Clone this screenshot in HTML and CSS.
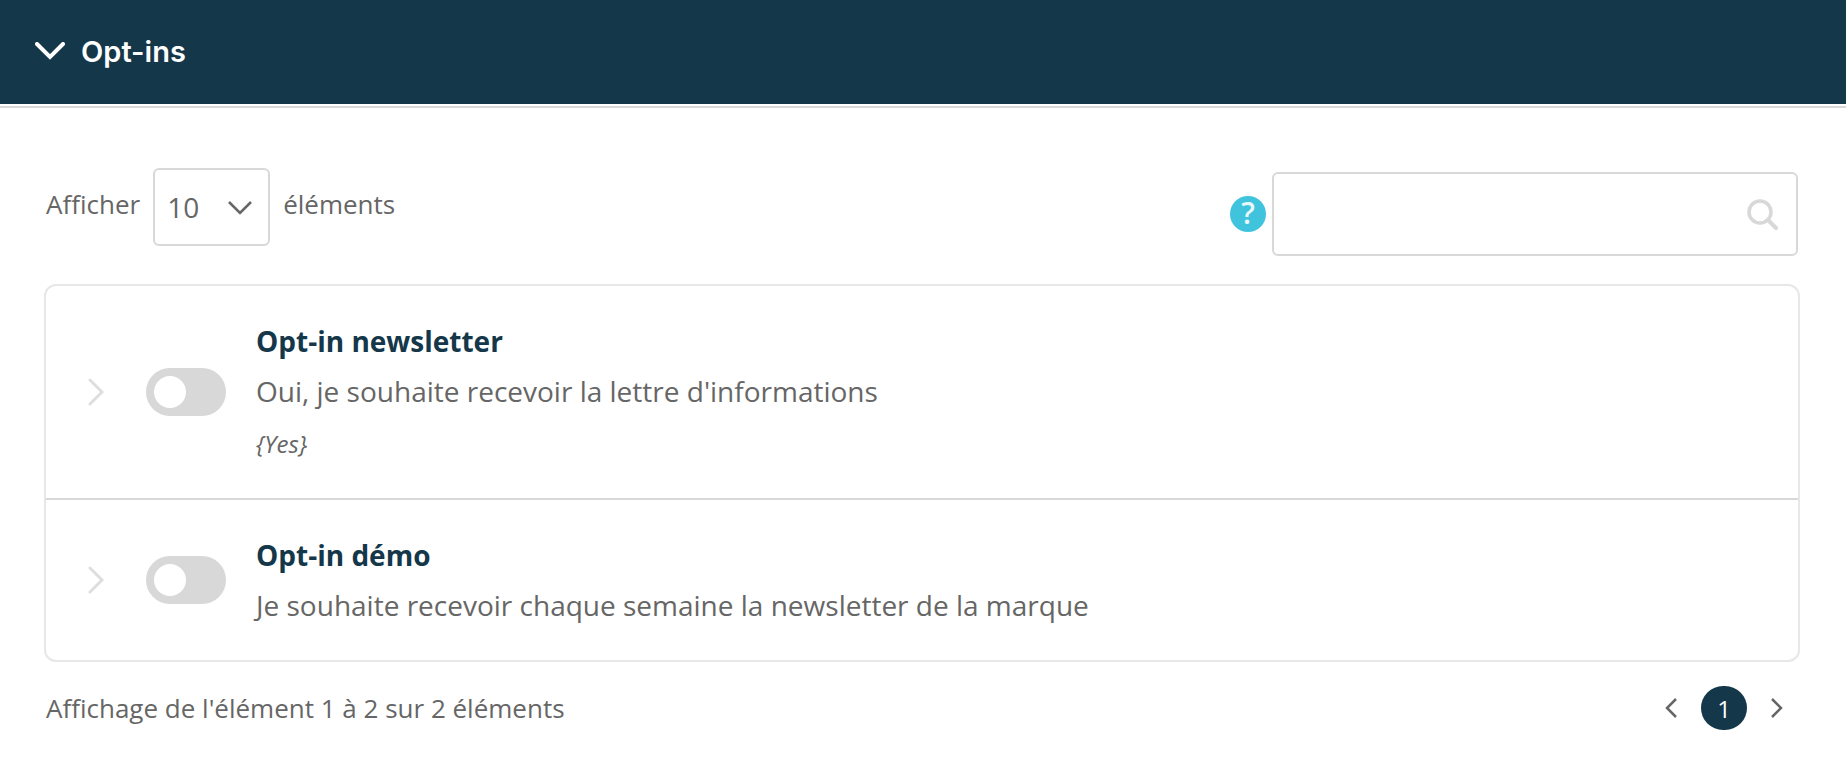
FILE: index.html
```html
<!DOCTYPE html>
<html lang="fr">
<head>
    <meta charset="UTF-8">
    <meta name="viewport" content="width=device-width, initial-scale=1.0">
    <title>Opt-ins</title>
    <link rel="stylesheet" href="styles.css">
</head>
<body>
    <section class="panel">
        <header class="panel-header">
            <button type="button" class="panel-toggle" aria-expanded="true">
                <svg width="30" height="18" viewBox="0 0 30 18" fill="none" stroke="currentColor" stroke-width="4" stroke-linecap="round"><path d="M2 2l13 13L28 2"/></svg>
                <span>Opt-ins</span>
            </button>
        </header>

        <div class="panel-body">
            <div class="toolbar">
                <div class="length">
                    <label for="pageLength">Afficher</label>
                    <div class="select-box">
                        <select id="pageLength">
                            <option value="10">10</option>
                            <option value="25">25</option>
                            <option value="50">50</option>
                        </select>
                        <svg class="select-arrow" width="24" height="14" viewBox="0 0 24 14" fill="none" stroke="currentColor" stroke-width="2.5"><path d="M1 1l11 11L23 1"/></svg>
                    </div>
                    <label for="pageLength">éléments</label>
                </div>

                <div class="search">
                    <button type="button" class="help" aria-label="Aide">?</button>
                    <div class="search-box">
                        <input type="search" id="search" aria-label="Rechercher">
                        <svg class="search-icon" width="32" height="32" viewBox="0 0 32 32" fill="none" stroke="currentColor" stroke-linecap="round"><circle cx="13" cy="13" r="11" stroke-width="3.5"/><path d="M21 21l8 8" stroke-width="4"/></svg>
                    </div>
                </div>
            </div>

            <div class="table-box">
                <table class="optins">
                    <tbody>
                        <tr>
                            <td class="col-expand">
                                <button type="button" class="expand" aria-label="Détails">
                                    <svg width="16" height="28" viewBox="0 0 16 28" fill="none" stroke="currentColor" stroke-width="3" stroke-linecap="round"><path d="M2 2l12 12L2 26"/></svg>
                                </button>
                            </td>
                            <td class="col-switch">
                                <input type="checkbox" class="switch" aria-labelledby="optin1">
                            </td>
                            <td>
                                <div class="optin-title" id="optin1">Opt-in newsletter</div>
                                <div class="optin-text">Oui, je souhaite recevoir la lettre d'informations</div>
                                <div class="optin-value">{Yes}</div>
                            </td>
                        </tr>
                        <tr>
                            <td class="col-expand">
                                <button type="button" class="expand" aria-label="Détails">
                                    <svg width="16" height="28" viewBox="0 0 16 28" fill="none" stroke="currentColor" stroke-width="3" stroke-linecap="round"><path d="M2 2l12 12L2 26"/></svg>
                                </button>
                            </td>
                            <td class="col-switch">
                                <input type="checkbox" class="switch" aria-labelledby="optin2">
                            </td>
                            <td>
                                <div class="optin-title" id="optin2">Opt-in démo</div>
                                <div class="optin-text">Je souhaite recevoir chaque semaine la newsletter de la marque</div>
                            </td>
                        </tr>
                    </tbody>
                </table>
            </div>

            <div class="table-footer">
                <div class="info">Affichage de l'élément 1 à 2 sur 2 éléments</div>
                <nav class="pagination">
                    <button type="button" class="page-arrow" aria-label="Précédent">
                        <svg width="12" height="20" viewBox="0 0 12 20" fill="none" stroke="currentColor" stroke-width="2.5"><path d="M11 1l-9 9 9 9"/></svg>
                    </button>
                    <button type="button" class="page-number" aria-current="page">1</button>
                    <button type="button" class="page-arrow" aria-label="Suivant">
                        <svg width="12" height="20" viewBox="0 0 12 20" fill="none" stroke="currentColor" stroke-width="2.5"><path d="M1 1l9 9-9 9"/></svg>
                    </button>
                </nav>
            </div>
        </div>
    </section>
</body>
</html>
```
FILE: styles.css
```css
* {
    box-sizing: border-box;
}

body {
    margin: 0;
    font-family: "Open Sans", "Noto Sans", sans-serif;
    font-size: 26px;
    color: #666;
    background-color: #fff;
}

button, input, select {
    font-family: inherit;
    color: inherit;
}

button {
    display: flex;
    align-items: center;
    justify-content: center;
    padding: 0;
    border: none;
    background: none;
    cursor: pointer;
}

/* Header */
.panel-header {
    padding-bottom: 2px;
    border-bottom: 2px solid #d8d8d8;
}

.panel-toggle {
    justify-content: flex-start;
    gap: 16px;
    width: 100%;
    height: 104px;
    padding: 0 35px 2px;
    color: #fff;
    background-color: #15374a;
    font-family: Inter, sans-serif;
    font-size: 29px;
    font-weight: 600;
}

.panel-body {
    padding: 60px 46px 50px 44px;
}

/* Toolbar */
.toolbar {
    display: flex;
    justify-content: space-between;
    margin-bottom: 28px;
    padding: 0 2px;
}

.length {
    display: flex;
    align-items: center;
    align-self: flex-start;
    gap: 13px;
}

.length label {
    padding-bottom: 6px;
}

.select-box {
    position: relative;
}

.select-box select {
    appearance: none;
    width: 117px;
    height: 78px;
    padding: 0 12px;
    border: 2px solid #d8d8d8;
    border-radius: 6px;
    background-color: #fff;
    font-size: 28px;
}

.select-arrow {
    position: absolute;
    top: 33px;
    right: 18px;
    pointer-events: none;
}

.search {
    display: flex;
    align-items: center;
    gap: 6px;
    margin-top: 4px;
}

.help {
    width: 36px;
    height: 36px;
    padding-bottom: 2px;
    border-radius: 50%;
    color: #e9f8fb;
    background-color: #40c4de;
    font-size: 30px;
    font-weight: 600;
    line-height: 34px;
}

.search-box {
    position: relative;
}

.search-box input {
    appearance: none;
    display: block;
    width: 526px;
    height: 84px;
    padding: 0 60px 0 16px;
    border: 2px solid #d8d8d8;
    border-radius: 6px;
    background-color: #fff;
    font-size: 28px;
}

.search-icon {
    position: absolute;
    top: 27px;
    right: 19px;
    color: #d8d8d8;
    pointer-events: none;
}

/* Table */
.table-box {
    border: 2px solid #e7e7e7;
    border-radius: 12px;
}

.optins {
    width: 100%;
    border-spacing: 0;
}

.optins td {
    padding: 30px 0;
}

.optins tr + tr td {
    border-top: 2px solid #d8d8d8;
}

.optins .col-expand {
    width: 100px;
    padding-left: 42px;
}

.optins .col-switch {
    width: 110px;
}

.expand {
    color: #dedede;
}

.switch {
    appearance: none;
    display: block;
    width: 80px;
    height: 48px;
    margin: 0;
    padding: 8px;
    border-radius: 24px;
    background-color: #d8d8d8;
    cursor: pointer;
}

.switch::before {
    content: "";
    display: block;
    width: 32px;
    height: 32px;
    border-radius: 50%;
    background-color: #fff;
}

.switch:checked {
    background-color: #15374a;
}

.switch:checked::before {
    margin-left: auto;
}

.optin-title,
.optin-text {
    font-size: 28px;
    line-height: 50px;
}

.optin-title {
    color: #15374a;
    font-weight: 700;
}

.optin-value {
    padding-top: 4px;
    font-size: 24px;
    font-style: italic;
    line-height: 48px;
}

/* Footer */
.table-footer {
    display: flex;
    align-items: center;
    justify-content: space-between;
    padding: 24px 17px 0 2px;
}

.pagination {
    display: flex;
    align-items: center;
    gap: 24px;
}

.page-number {
    width: 46px;
    height: 44px;
    border-radius: 22px;
    color: #fff;
    background-color: #15374a;
    font-size: 24px;
}
```
